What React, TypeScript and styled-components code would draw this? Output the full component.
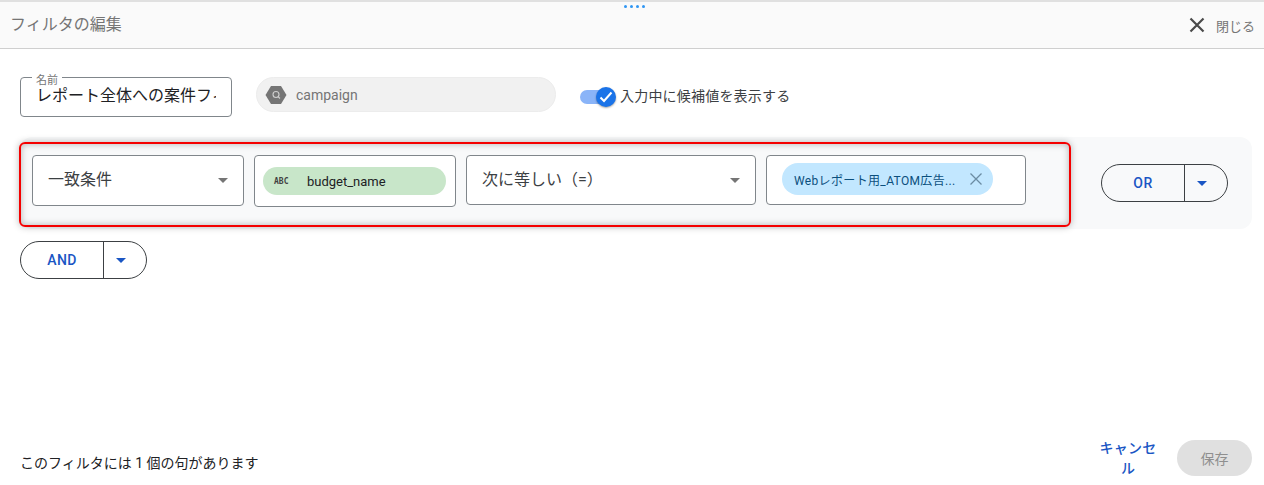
import React from "react";
import styled, { createGlobalStyle } from "styled-components";

const Global = createGlobalStyle`
  html, body { margin: 0; padding: 0; background: #fff; }
  body { font-family: Roboto, "Noto Sans CJK JP", sans-serif; }
  * { box-sizing: border-box; }
`;

const Page = styled.div`
  width: 1264px; height: 485px; display: flex; flex-direction: column;
  position: relative; overflow: hidden; background: #fff;
  border-top: 2px solid #e0e0e0;
`;
const DragDots = styled.div`
  position: absolute; top: 3px; left: 624px; display: flex; gap: 3px;
  span { width: 3px; height: 3px; border-radius: 50%; background: #2f96f3; }
`;
const Header = styled.header`
  height: 47px; flex: none; background: #fafafa; border-bottom: 1px solid #cfcfcf;
  display: flex; align-items: center; justify-content: space-between;
  padding: 0 9px 0 10px;
`;
const Title = styled.h1`
  margin: 0; font-size: 16px; font-weight: 400; color: #757575; line-height: 20px;
`;
const CloseButton = styled.div`
  display: flex; align-items: center; gap: 11px; color: #757575; font-size: 13px;
  svg { display: block; }
`;
const Main = styled.main`
  flex: 1; display: flex; flex-direction: column; padding: 28px 12px 0 20px;
`;
const TopRow = styled.div`
  display: flex; align-items: flex-start; height: 40px;
`;
const NameField = styled.div`
  position: relative; width: 212px; height: 40px; border: 1px solid #80868b;
  border-radius: 4px; padding: 7px 0 0 15px;
  font-size: 16px; line-height: 22px; color: #202124; white-space: nowrap; background: #fff;
`;
const NameText = styled.div`
  width: 180px; overflow: hidden; white-space: nowrap;
`;
const NameLabel = styled.span`
  position: absolute; top: -3px; left: 11px; padding: 0 4px; background: #fff;
  font-size: 11px; line-height: 11px; color: #757575;
`;
const SourceChip = styled.div`
  margin-left: 24px; width: 300px; height: 35px; border-radius: 18px;
  background: #f1f1f1; border: 1px solid #ececec; display: flex; align-items: center;
  padding-left: 8px; gap: 9px; font-size: 14px; color: #757575;
`;
const Toggle = styled.div`
  position: relative; width: 36px; height: 20px; margin: 10px 0 0 24px; flex: none;
`;
const Track = styled.div`
  position: absolute; left: 0; top: 3px; width: 28px; height: 14px; border-radius: 7px;
  background: #8ab4f8;
`;
const Thumb = styled.div`
  position: absolute; left: 16px; top: 0; width: 20px; height: 20px; border-radius: 50%;
  background: #1a73e8; box-shadow: 0 1px 2px rgba(0,0,0,.35);
  display: flex; align-items: center; justify-content: center;
`;
const ToggleLabel = styled.span`
  margin: 9px 0 0 4px; font-size: 14px; line-height: 20px; color: #3c4043; white-space: nowrap;
  letter-spacing: .2px;
`;
const ClauseGroup = styled.section`
  position: relative; margin-top: 20px; height: 92px; border-radius: 12px;
  background: #f8f9fa; padding: 18px 24px 0 12px; display: flex; align-items: flex-start;
`;
const Highlight = styled.div`
  position: absolute; left: -1px; top: 5px; width: 1052px; height: 85px;
  border: 2px solid #f40000; border-radius: 6px; pointer-events: none;
  box-shadow: 0 0 7px rgba(0,0,0,.28), inset 0 0 7px rgba(0,0,0,.28);
`;
const Field = styled.div<{ $w: number; $h: number }>`
  width: ${p => p.$w}px; height: ${p => p.$h}px; flex: none; margin-right: 10px;
  background: #fff; border: 1px solid #80868b; border-radius: 4px;
  display: flex; align-items: center;
`;
const SelectText = styled.span`
  flex: 1; padding-left: 15px; font-size: 16px; color: #3c4043; margin-top: -5px; white-space: nowrap;
`;
const Caret = styled.span<{ $color?: string }>`
  width: 0; height: 0; border-left: 5px solid transparent; border-right: 5px solid transparent;
  border-top: 5px solid ${p => p.$color || "#757575"}; flex: none;
`;
const SelectCaret = styled(Caret)`
  margin-right: 15px;
`;
const FieldChip = styled.div`
  margin-left: 8px; width: 183px; height: 28px; border-radius: 14px; background: #c8e6c9;
  display: flex; align-items: center; font-size: 13px; color: #202124;
`;
const TypeTag = styled.span`
  width: 44px; padding-left: 11px; font-family: "DejaVu Sans Mono", monospace; font-size: 8px;
  font-weight: 700; color: #424242; flex: none;
`;
const ValueChip = styled.div`
  margin: -2px 0 0 15px; width: 211px; height: 32px; border-radius: 16px; background: #c2e7ff;
  display: flex; align-items: center; justify-content: space-between;
  padding: 0 10px 0 12px; font-size: 12px; font-weight: 400; letter-spacing: .35px;
  color: #0b4f7d; white-space: nowrap;
`;
const Spacer = styled.div`
  flex: 1;
`;
const SplitButton = styled.div`
  width: 127px; height: 38px; border: 1px solid #3c4043; border-radius: 19px;
  display: flex; align-items: stretch; flex: none; background: transparent;
`;
const SplitLabel = styled.span<{ $w: number }>`
  width: ${p => p.$w}px; border-right: 1px solid #3c4043; display: flex; align-items: center;
  justify-content: center; font-size: 14px; font-weight: 500; letter-spacing: .4px;
  color: #1a56c4; flex: none;
`;
const SplitCaret = styled.span`
  flex: 1; display: flex; align-items: center; justify-content: center; padding-right: 8px;
`;
const OrWrap = styled.div`
  margin-top: 9px;
`;
const AndWrap = styled.div`
  margin-top: 12px;
`;
const Footer = styled.footer`
  position: absolute; left: 20px; right: 12px; bottom: 9px; display: flex; align-items: center;
  height: 36px;
`;
const ClauseCount = styled.span`
  font-size: 14px; color: #202124; margin-top: 8px;
`;
const Cancel = styled.span`
  width: 60px; text-align: center; font-size: 14px; line-height: 20px; font-weight: 500;
  letter-spacing: .2px; color: #1a56c4; margin-right: 19px; margin-top: -1px;
`;
const Save = styled.span`
  width: 75px; height: 36px; border-radius: 18px; background: #e0e0e0; color: #8f8f8f;
  font-size: 14px; font-weight: 400; display: flex; align-items: center; justify-content: center;
`;

export default function App() {
  return (
    <Page>
      <Global />
      <DragDots><span /><span /><span /><span /></DragDots>
      <Header>
        <Title>フィルタの編集</Title>
        <CloseButton>
          <svg width="16" height="16" viewBox="0 0 16 16">
            <path d="M1.5 1.5 14.5 14.5M14.5 1.5 1.5 14.5" stroke="#4a4a4a" strokeWidth="2.2" fill="none" />
          </svg>
          閉じる
        </CloseButton>
      </Header>
      <Main>
        <TopRow>
          <NameField>
            <NameLabel>名前</NameLabel>
            <NameText>レポート全体への案件フィルタ</NameText>
          </NameField>
          <SourceChip>
            <svg width="22" height="20" viewBox="0 0 22 20">
              <path d="M6 1h10l5.5 9L16 19H6L.5 10z" fill="#757575" />
              <circle cx="11" cy="9.5" r="3" fill="none" stroke="#cfcfcf" strokeWidth="1.1" />
              <path d="M13 11.5l2 2" stroke="#cfcfcf" strokeWidth="1.1" />
            </svg>
            campaign
          </SourceChip>
          <Toggle>
            <Track />
            <Thumb>
              <svg width="14" height="12" viewBox="0 0 14 12">
                <path d="M1.5 6.5 5 10l7.5-8.5" stroke="#fff" strokeWidth="2" fill="none" />
              </svg>
            </Thumb>
          </Toggle>
          <ToggleLabel>入力中に候補値を表示する</ToggleLabel>
        </TopRow>
        <ClauseGroup>
          <Field $w={212} $h={51}>
            <SelectText>一致条件</SelectText>
            <SelectCaret />
          </Field>
          <Field $w={202} $h={52}>
            <FieldChip>
              <TypeTag>ABC</TypeTag>
              budget_name
            </FieldChip>
          </Field>
          <Field $w={290} $h={50}>
            <SelectText>次に等しい（=）</SelectText>
            <SelectCaret />
          </Field>
          <Field $w={260} $h={50}>
            <ValueChip>
              Webレポート用_ATOM広告...
              <svg width="14" height="14" viewBox="0 0 14 14">
                <path d="M1.5 1.5 12.5 12.5M12.5 1.5 1.5 12.5" stroke="#6b8ca3" strokeWidth="1.3" fill="none" />
              </svg>
            </ValueChip>
          </Field>
          <Spacer />
          <OrWrap>
            <SplitButton>
              <SplitLabel $w={83}>OR</SplitLabel>
              <SplitCaret><Caret $color="#1a56c4" /></SplitCaret>
            </SplitButton>
          </OrWrap>
          <Highlight />
        </ClauseGroup>
        <AndWrap>
          <SplitButton>
            <SplitLabel $w={83}>AND</SplitLabel>
            <SplitCaret><Caret $color="#1a56c4" /></SplitCaret>
          </SplitButton>
        </AndWrap>
      </Main>
      <Footer>
        <ClauseCount>このフィルタには 1 個の句があります</ClauseCount>
        <Spacer />
        <Cancel>キャンセル</Cancel>
        <Save>保存</Save>
      </Footer>
    </Page>
  );
}
